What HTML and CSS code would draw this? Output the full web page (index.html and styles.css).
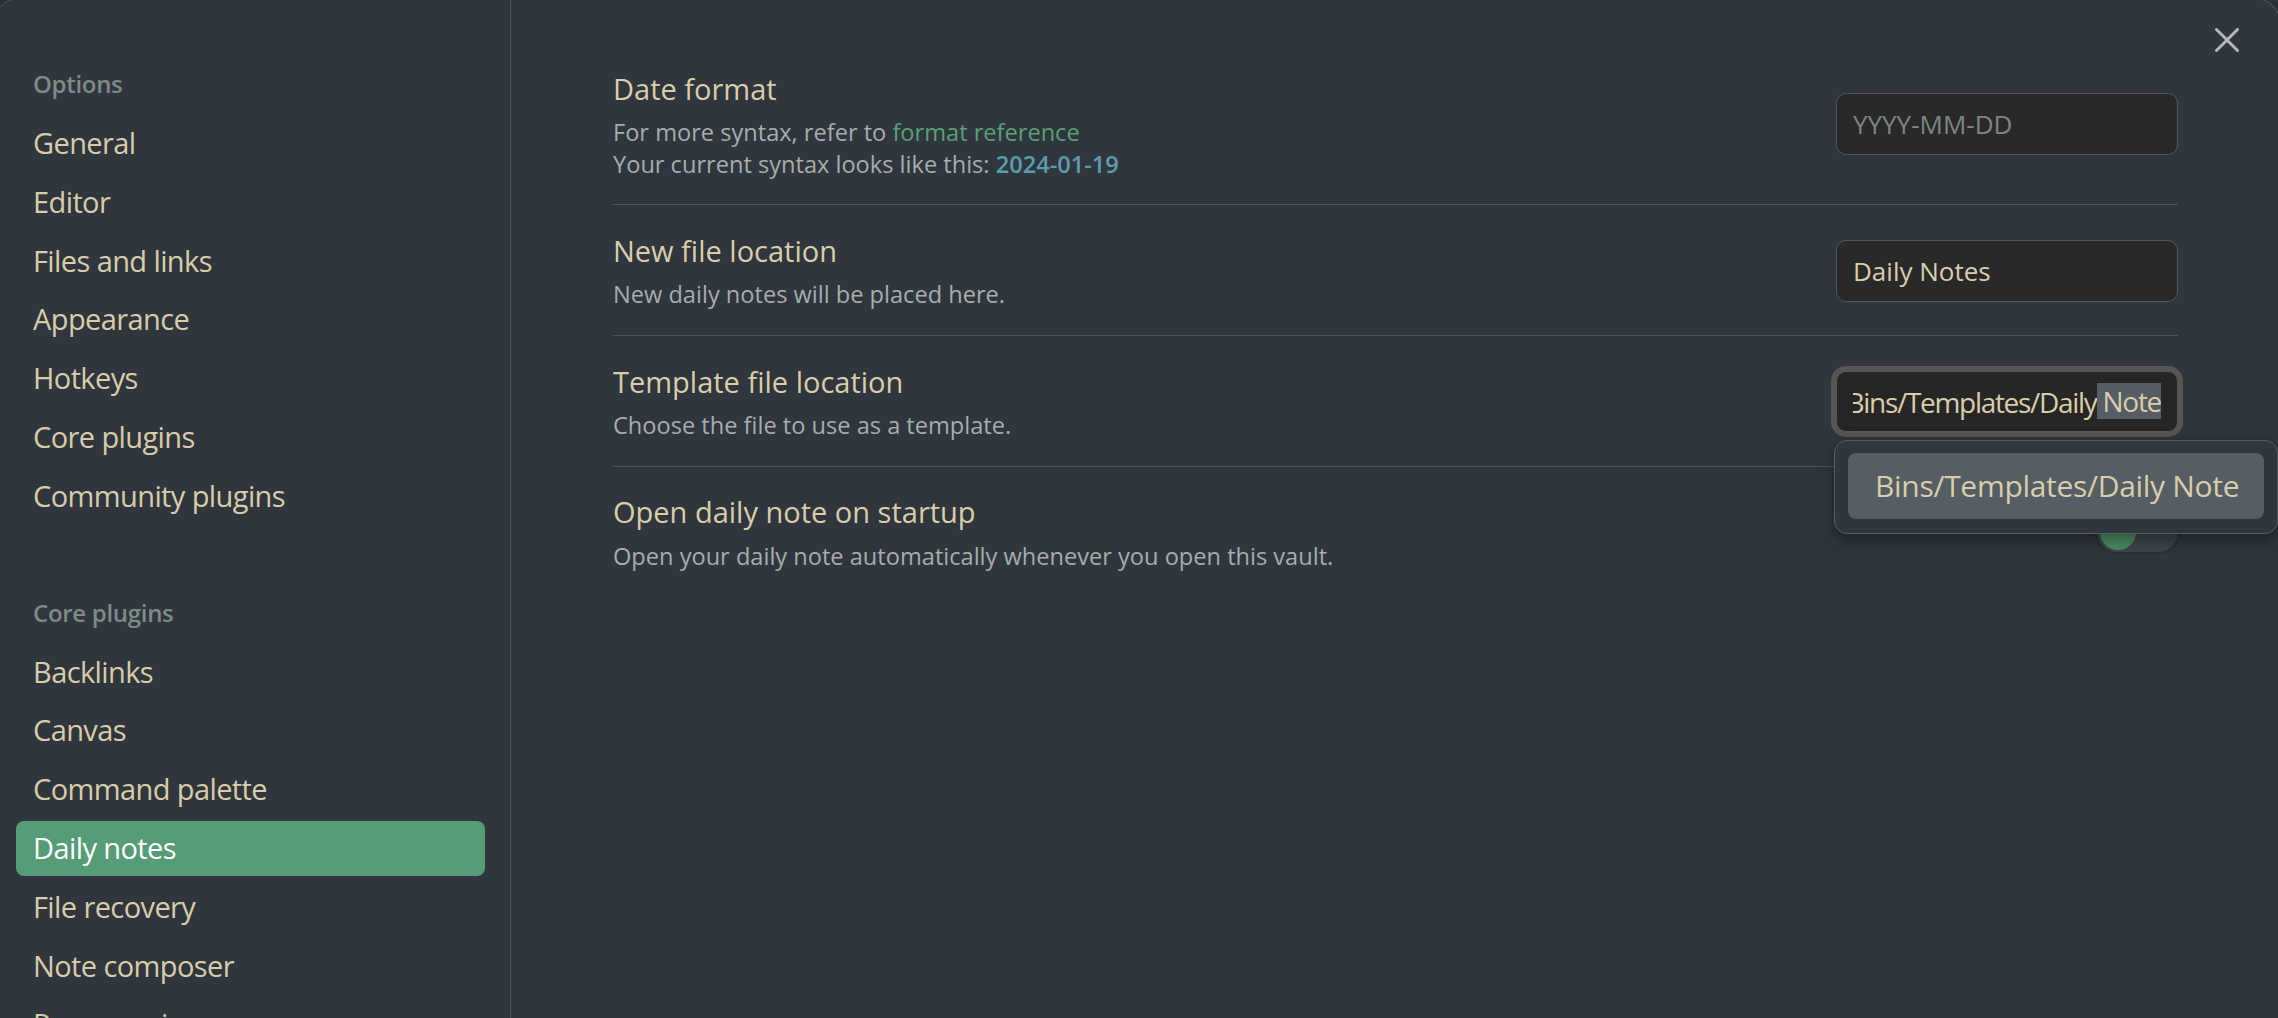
FILE: index.html
```html
<!DOCTYPE html>
<html lang="en">
<head>
<meta charset="utf-8">
<title>Settings – Daily notes</title>
<link rel="stylesheet" href="styles.css">
</head>
<body>
<div class="modal">
  <nav class="sidebar">
    <div class="group">
      <div class="group-title">Options</div>
      <div class="nav-item">General</div>
      <div class="nav-item">Editor</div>
      <div class="nav-item">Files and links</div>
      <div class="nav-item">Appearance</div>
      <div class="nav-item">Hotkeys</div>
      <div class="nav-item">Core plugins</div>
      <div class="nav-item">Community plugins</div>
    </div>
    <div class="group">
      <div class="group-title">Core plugins</div>
      <div class="nav-item">Backlinks</div>
      <div class="nav-item">Canvas</div>
      <div class="nav-item">Command palette</div>
      <div class="nav-item active">Daily notes</div>
      <div class="nav-item">File recovery</div>
      <div class="nav-item">Note composer</div>
      <div class="nav-item">Page preview</div>
      <div class="nav-item">Quick switcher</div>
    </div>
  </nav>

  <main class="content">
    <div class="setting">
      <div class="info">
        <div class="name">Date format</div>
        <div class="desc">For more syntax, refer to <a class="link" href="#">format reference</a><br>Your current syntax looks like this: <b class="pop">2024-01-19</b></div>
      </div>
      <div class="control">
        <input class="text-input" type="text" placeholder="YYYY-MM-DD">
      </div>
    </div>

    <div class="setting">
      <div class="info">
        <div class="name">New file location</div>
        <div class="desc">New daily notes will be placed here.</div>
      </div>
      <div class="control">
        <input class="text-input" type="text" value="Daily Notes">
      </div>
    </div>

    <div class="setting">
      <div class="info">
        <div class="name">Template file location</div>
        <div class="desc">Choose the file to use as a template.</div>
      </div>
      <div class="control">
        <div class="text-input focused" role="textbox">
          <div class="scroller"><span>Bins/Templates/Daily</span><span class="sel"> Note</span></div>
        </div>
      </div>
    </div>

    <div class="setting">
      <div class="info">
        <div class="name">Open daily note on startup</div>
        <div class="desc">Open your daily note automatically whenever you open this vault.</div>
      </div>
      <div class="control">
        <div class="toggle"><span class="knob"></span></div>
      </div>
    </div>
  </main>

  <button class="close" aria-label="Close">
    <svg width="24" height="24" viewBox="0 0 24 24"><path d="M1.5 1.5 L22.5 22.5 M22.5 1.5 L1.5 22.5" stroke="#b4b8ba" stroke-width="3" stroke-linecap="round" fill="none"/></svg>
  </button>

  <div class="suggest">
    <div class="suggest-item">Bins/Templates/Daily Note</div>
  </div>
</div>
</body>
</html>
```

FILE: styles.css
```css
html, body {
  margin: 0;
  padding: 0;
  height: 1018px;
  overflow: hidden;
  background: #2b3138;
  font-family: "Open Sans", "Noto Sans", sans-serif;
}

.modal {
  position: relative;
  display: flex;
  height: 1040px;
  margin: -2px -3px 0 -7px;
  border: 1px solid #50575e;
  border-radius: 26px;
  background: #2f363d;
  overflow: hidden;
}

/* ---------- sidebar ---------- */
.sidebar {
  flex: 0 0 517px;
  box-sizing: border-box;
  width: 517px;
  padding: 57px 25px 0 22px;
  border-right: 1px solid #4b5259;
  display: flex;
  flex-direction: column;
  gap: 61px;
  overflow: hidden;
}

.group {
  display: flex;
  flex-direction: column;
  gap: 4px;
}

.group-title {
  height: 56px;
  line-height: 56px;
  padding-left: 17px;
  font-size: 24px;
  font-weight: 600;
  color: #7e8a84;
  letter-spacing: -0.3px;
}

.nav-item {
  height: 54.8px;
  line-height: 54.8px;
  padding: 0 17px;
  border-radius: 8px;
  font-size: 29px;
  letter-spacing: -0.6px;
  color: #d9cca8;
  white-space: nowrap;
}

.nav-item.active {
  background: #559c77;
  color: #ffffff;
}

/* ---------- content ---------- */
.content {
  flex: 1;
  padding: 44px 102px 0 102px;
}

.setting {
  display: flex;
  align-items: center;
  padding: 25.8px 0 24px;
  border-top: 1px solid #4b535a;
}

.setting:first-child {
  border-top: none;
}

.info {
  flex: 1;
}

.name {
  font-size: 29px;
  line-height: 39px;
  color: #dacda9;
}

.desc {
  margin-top: 9.5px;
  font-size: 23.6px;
  line-height: 31.4px;
  color: #a8acab;
}

.link {
  color: #5b9f74;
  text-decoration: none;
}

.pop {
  color: #5c9cae;
  font-weight: 600;
}

.control {
  display: flex;
  justify-content: flex-end;
}

.text-input {
  box-sizing: border-box;
  width: 342px;
  height: 62px;
  padding: 0 16px;
  border: 1px solid #4f575f;
  border-radius: 10px;
  background: #292929;
  font-family: "Open Sans", "Noto Sans", sans-serif;
  font-size: 26px;
  color: #dacda9;
  outline: none;
}

.text-input::placeholder {
  color: #7b8781;
  opacity: 1;
}

.text-input.focused {
  display: flex;
  align-items: center;
  height: 61px;
  border-color: #565656;
  background: #262626;
  box-shadow: 0 0 0 5px #565656;
}

.scroller {
  flex: 1;
  display: flex;
  justify-content: flex-end;
  overflow: hidden;
  white-space: pre;
  font-size: 28px;
  letter-spacing: -1.3px;
  color: #dacda9;
}

.sel {
  display: inline-block;
  height: 36px;
  line-height: 36px;
  background: #545c64;
}

.toggle {
  position: relative;
  width: 81px;
  height: 40px;
  border-radius: 20px;
  background: #3f454a;
  box-shadow: 0 0 3px rgba(0, 0, 0, 0.35);
}

.knob {
  position: absolute;
  left: 3px;
  top: 2px;
  width: 36px;
  height: 36px;
  border-radius: 50%;
  background: #4b8b63;
}

/* ---------- overlays ---------- */
.close {
  position: absolute;
  top: 29px;
  right: 41px;
  width: 24px;
  height: 24px;
  padding: 0;
  border: none;
  background: none;
  display: flex;
}

.suggest {
  position: absolute;
  left: 1840px;
  top: 441px;
  box-sizing: border-box;
  width: 444px;
  height: 94px;
  padding: 12px 13px;
  border: 1px solid #545c63;
  border-radius: 13px;
  background: #30363d;
  box-shadow: 0 6px 18px rgba(0, 0, 0, 0.4);
}

.suggest-item {
  height: 66px;
  line-height: 66px;
  padding-left: 27px;
  border-radius: 8px;
  background: #555d65;
  font-size: 30px;
  letter-spacing: -0.3px;
  color: #dacda9;
  white-space: nowrap;
}
```
